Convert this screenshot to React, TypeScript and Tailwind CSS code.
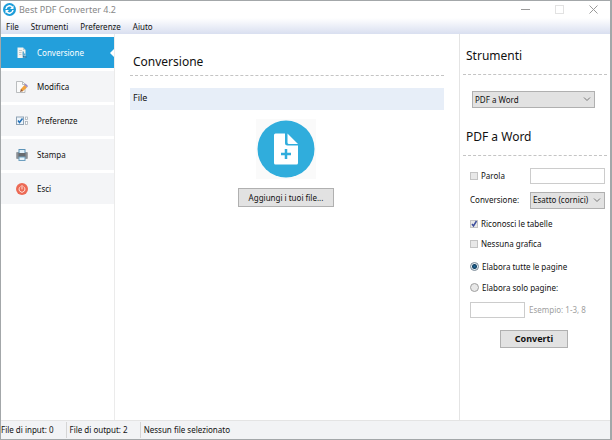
import { ReactNode } from "react";
import clsx from "clsx";

function LogoIcon() {
  return (
    <svg viewBox="0 0 26 26" className="size-[13px]">
      <circle cx="13" cy="13" r="13" fill="#1d9dd9" />
      <path
        d="M6 12a7 7 0 0 1 12.500-3.500M20 14a7 7 0 0 1-12.500 3.500"
        fill="none"
        stroke="#fff"
        strokeWidth="3"
      />
      <path d="M21 5v7h-7zM5 21v-7h7z" fill="#fff" />
    </svg>
  );
}

function ConvertIcon() {
  return (
    <svg viewBox="0 0 24 24" className="size-3">
      <path d="M3 1h11l5 5v16H3z" fill="#f4f4f0" />
      <path d="M14 1l5 5h-5z" fill="#b9cbd4" />
      <path d="M6 7h6M6 11h5M6 15h5" stroke="#c3c9cb" strokeWidth="2" />
      <path d="M13 9h3v4h3v4h-6z" fill="#5aa9d0" />
      <path d="M15 17v3h6" fill="none" stroke="#2777a5" strokeWidth="3" />
    </svg>
  );
}

function EditIcon() {
  return (
    <svg viewBox="0 0 24 24" className="size-3">
      <path d="M1 1h12l5 5v17H1z" fill="#fafafa" stroke="#a5a9ac" strokeWidth="1.500" />
      <path d="M13 2v5h5" fill="none" stroke="#a5a9ac" strokeWidth="1.500" />
      <path d="M9 17l8-9 5 5-9 8z" fill="#f2a33c" />
      <path d="M17 8l2-3 5 5-2 3z" fill="#a08cc0" />
      <path d="M8 22l2-6 4 4z" fill="#8f5a3c" />
    </svg>
  );
}

function PrefsIcon() {
  return (
    <svg viewBox="0 0 24 24" className="size-3">
      <rect x="1" y="4" width="14" height="15" fill="#eef5fb" stroke="#8fa3b5" strokeWidth="2" />
      <path d="M4 11l3 4 6-8" fill="none" stroke="#2371b8" strokeWidth="3" />
      <rect x="19" y="4" width="4" height="5" fill="#fff" stroke="#a4adb5" strokeWidth="1.500" />
      <rect x="19" y="13" width="4" height="6" fill="#fff" stroke="#a4adb5" strokeWidth="1.500" />
    </svg>
  );
}

function PrintIcon() {
  return (
    <svg viewBox="0 0 24 24" className="size-3">
      <rect x="0" y="6" width="24" height="14" rx="2" fill="#a3a7ab" />
      <path d="M4 7v12M20 7v12" stroke="#74797e" strokeWidth="2" />
      <rect x="6" y="1" width="12" height="8" fill="#dff0fa" stroke="#5c93b8" strokeWidth="2" />
      <rect x="5" y="8" width="14" height="8" fill="#666b70" />
      <rect x="6" y="16" width="12" height="7" fill="#e6f4fc" stroke="#6d9fc0" strokeWidth="2" />
    </svg>
  );
}

function ExitIcon() {
  return (
    <svg viewBox="0 0 24 24" className="size-3">
      <circle cx="12" cy="12" r="12" fill="#ec6a55" />
      <path
        d="M8.500 7.500a6 6 0 1 0 7 0M12 5v7"
        fill="none"
        stroke="#ffe3dc"
        strokeWidth="2"
        strokeLinecap="round"
      />
    </svg>
  );
}

function AddFileIcon() {
  return (
    <svg viewBox="0 0 60 60" className="size-[60px] bg-[#fafafa]">
      <circle cx="30" cy="30" r="28.500" fill="#30addc" />
      <path
        d="M19.500 14.500H29V24a2.500 2.500 0 0 0 2.500 2.500H42V44a1.500 1.500 0 0 1-1.500 1.500h-21A1.500 1.500 0 0 1 18 44V16a1.500 1.500 0 0 1 1.500-1.500z"
        fill="#fff"
      />
      <path d="M31.500 14.500L42 25H33a1.500 1.500 0 0 1-1.500-1.500z" fill="#fff" />
      <path d="M30 30v10M25 35h10" stroke="#30addc" strokeWidth="2.500" />
    </svg>
  );
}

function NavItem({ icon, label, active }: { icon: ReactNode; label: string; active?: boolean }) {
  return (
    <button
      className={clsx(
        "relative flex h-[31px] w-full items-center gap-[9px] pl-[15px] text-left text-[8px]",
        active ? "bg-[#239fdb] text-white" : "bg-[#f4f5f7]",
      )}
    >
      {icon}
      {label}
      {active && (
        <svg viewBox="0 0 4 8" className="absolute top-3 right-0 h-2 w-1">
          <path d="M4 0v8L0 4z" fill="#fff" />
        </svg>
      )}
    </button>
  );
}

function Heading({ children, className }: { children: ReactNode; className?: string }) {
  return (
    <h2
      className={clsx(
        "border-b border-dashed border-[#c4c4c4] pr-1 pl-[3px] text-[12px] leading-5",
        className,
      )}
    >
      {children}
    </h2>
  );
}

function Select({ id, label, options }: { id: string; label?: string; options: string[] }) {
  return (
    <div className="relative flex-1">
      <select
        id={id}
        aria-label={label}
        className="block h-[17px] w-full appearance-none border border-[#b0b0b0] bg-[#e2e2e2] pl-0.5 text-[8px] leading-3"
      >
        {options.map((o) => (
          <option key={o}>{o}</option>
        ))}
      </select>
      <svg viewBox="0 0 8 5" className="pointer-events-none absolute top-1.5 right-1 h-[5px] w-2">
        <path d="M1 .5l3 3 3-3" fill="none" stroke="#777" />
      </svg>
    </div>
  );
}

function Check({ label, checked }: { label: string; checked?: boolean }) {
  return (
    <label className="flex h-5 items-center gap-[3px]">
      <span className="relative flex">
        <input
          type="checkbox"
          defaultChecked={checked}
          className="peer size-2 appearance-none border border-[#c4c4c4] bg-[#e8e8e8]"
        />
        <svg viewBox="0 0 8 8" className="pointer-events-none invisible absolute inset-0 size-2 peer-checked:visible">
          <path d="M2 4l1.500 2 3-5" fill="none" stroke="#3d4e9c" strokeWidth="1.500" />
        </svg>
      </span>
      {label}
    </label>
  );
}

function Radio({ label, checked }: { label: string; checked?: boolean }) {
  return (
    <label className="flex h-[21px] items-center gap-[3px]">
      <input
        type="radio"
        name="pages"
        defaultChecked={checked}
        className="size-[9px] appearance-none rounded-full border border-[#a0a0a0] bg-[#e8e8e8] checked:border-[#7b8b98] checked:bg-[radial-gradient(circle,#1f6f9f_0,#123f63_2px,#e4edf3_3px)]"
      />
      {label}
    </label>
  );
}

export default function App() {
  return (
    <div className="flex min-h-screen flex-col border border-r-2 border-[#a3a7a9] bg-white font-['Noto_Sans','Open_Sans',sans-serif] text-[#111]">
      <header className="flex h-[17px] items-center pl-0.5">
        <LogoIcon />
        <h1 className="flex-1 pl-[3px] text-[9px] leading-4 text-[#888]">Best PDF Converter 4.2</h1>
        <div className="flex items-center gap-[25px] pr-3">
          <button aria-label="Riduci a icona">
            <svg viewBox="0 0 9 9" className="size-[9px]">
              <path d="M0 4.500h9" stroke="#999" />
            </svg>
          </button>
          <button aria-label="Ingrandisci">
            <svg viewBox="0 0 9 9" className="size-[9px]">
              <rect x=".5" y=".5" width="8" height="8" fill="none" stroke="#e2e2e2" />
            </svg>
          </button>
          <button aria-label="Chiudi">
            <svg viewBox="0 0 9 9" className="size-[9px]">
              <path d="M.5 .5l8 8M8.500 .5l-8 8" stroke="#999" />
            </svg>
          </button>
        </div>
      </header>
      <nav className="flex h-4 items-center gap-3 bg-linear-to-b from-white to-[#d9dff0] pt-0.5 pl-[5px] text-[8px]">
        <button>File</button>
        <button>Strumenti</button>
        <button>Preferenze</button>
        <button>Aiuto</button>
      </nav>

      <div className="flex flex-1">
        <aside className="flex w-[114px] flex-col gap-[3px] border-r border-[#ebebeb] pt-[3px]">
          <NavItem icon={<ConvertIcon />} label="Conversione" active />
          <NavItem icon={<EditIcon />} label="Modifica" />
          <NavItem icon={<PrefsIcon />} label="Preferenze" />
          <NavItem icon={<PrintIcon />} label="Stampa" />
          <NavItem icon={<ExitIcon />} label="Esci" />
        </aside>

        <main className="flex-1 pt-[18px] pr-[15px] pl-[15px]">
          <Heading className="pb-[3px]">Conversione</Heading>
          <h3 className="mt-3 h-[22px] bg-[#e7eef8] pl-[3px] text-[9px] leading-5">File</h3>
          <div className="flex flex-col items-center gap-[9px] pt-[9px] pr-0.5">
            <AddFileIcon />
            <button className="h-[19px] w-24 border border-[#b0b0b0] bg-[#e2e2e2] text-[8px]">
              Aggiungi i tuoi file...
            </button>
          </div>
        </main>

        <section className="w-[151px] border-l border-[#e4e4e4] pt-3 pr-[3px] pl-[3px] text-[8px]">
          <Heading className="pb-2">Strumenti</Heading>
          <div className="mt-4 mr-3 ml-[9px] flex">
            <Select id="tool" label="Strumenti" options={["PDF a Word", "PDF a Excel"]} />
          </div>
          <Heading className="mt-[19px] pb-2">PDF a Word</Heading>
          <div className="pt-2.5 pr-0.5 pl-[7px]">
            <div className="flex h-5 items-center">
              <div className="w-[60px]">
                <Check label="Parola" />
              </div>
              <input aria-label="Parola" className="h-4 min-w-0 flex-1 border border-[#ccc] bg-white px-1" />
            </div>
            <div className="mt-1 flex h-5 items-center">
              <label htmlFor="mode" className="w-[60px]">
                Conversione:
              </label>
              <Select id="mode" options={["Esatto (cornici)", "Scorrevole"]} />
            </div>
            <div className="mt-1">
              <Check label="Riconosci le tabelle" checked />
              <Check label="Nessuna grafica" />
            </div>
            <div className="mt-0.5">
              <Radio label="Elabora tutte le pagine" checked />
              <Radio label="Elabora solo pagine:" />
            </div>
            <div className="mt-1 flex items-center gap-1">
              <input id="range" className="h-4 w-[55px] border border-[#ccc] bg-white px-1" />
              <label htmlFor="range" className="text-[#a0a0a0]">
                Esempio: 1-3, 8
              </label>
            </div>
            <button className="mt-3 ml-[30px] block h-[18px] w-[68px] border border-[#b0b0b0] bg-[#e2e2e2] text-[9px] leading-4 font-bold">
              Converti
            </button>
          </div>
        </section>
      </div>

      <footer className="flex h-[19px] items-center gap-[3px] border-t border-[#e4e4e4] bg-[#f2f3f5] text-[8px] leading-4">
        <span className="border-r border-[#d5d5d5] pr-3">File di input: 0</span>
        <span className="border-r border-[#d5d5d5] pr-3">File di output: 2</span>
        <span>Nessun file selezionato</span>
      </footer>
    </div>
  );
}
